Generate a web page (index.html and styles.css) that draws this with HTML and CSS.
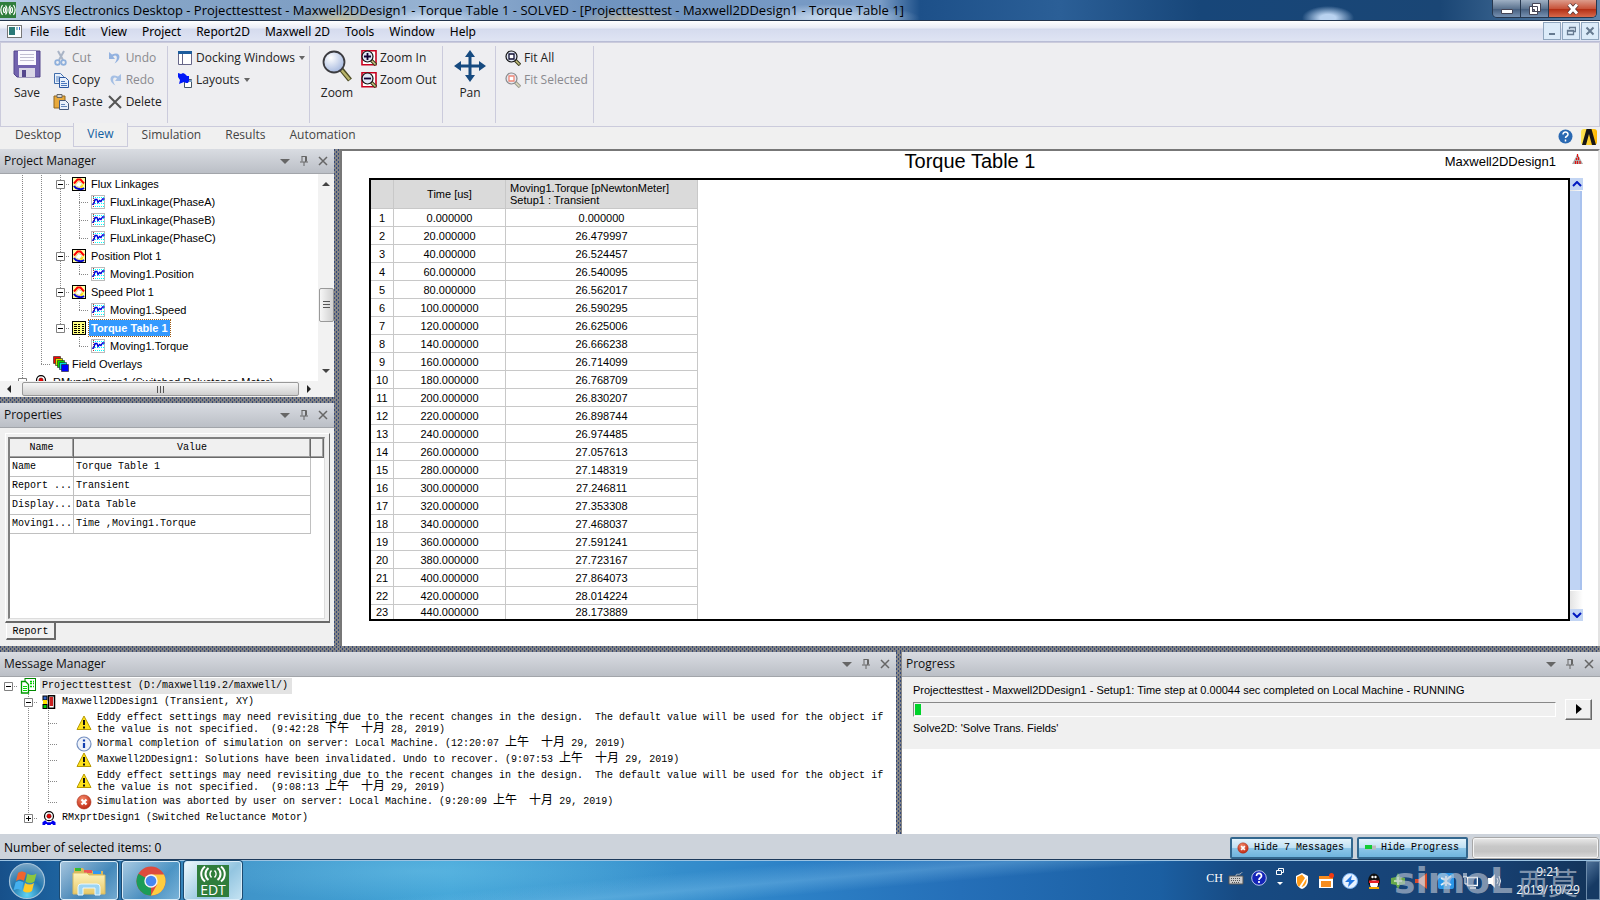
FILE: index.html
```html
<!DOCTYPE html>
<html lang="en">
<head>
<meta charset="utf-8">
<title>ANSYS Electronics Desktop</title>
<link rel="stylesheet" href="styles.css">
</head>
<body>
<svg class="defs" aria-hidden="true">
  <defs>
    <radialGradient id="gGlass" cx=".35" cy=".3" r=".8"><stop offset="0" stop-color="#fff"/><stop offset="1" stop-color="#9db2dc"/></radialGradient>
    <radialGradient id="gOrb" cx=".5" cy=".9" r=".9"><stop offset="0" stop-color="#5fd4f5"/><stop offset=".5" stop-color="#2377ae"/><stop offset="1" stop-color="#7ba6c6"/></radialGradient>
    <radialGradient id="gRed" cx=".4" cy=".3" r=".8"><stop offset="0" stop-color="#f58a6a"/><stop offset="1" stop-color="#b81c08"/></radialGradient>
    <linearGradient id="gFolder" x1="0" y1="0" x2="0" y2="1"><stop offset="0" stop-color="#fdf3bd"/><stop offset="1" stop-color="#e8c968"/></linearGradient>
    <linearGradient id="gYel" x1="0" y1="0" x2="1" y2="0"><stop offset="0" stop-color="#ffe95a"/><stop offset="1" stop-color="#fdb700"/></linearGradient>
  </defs>
  <symbol id="plot" viewBox="0 0 14 14"><rect x=".5" y=".5" width="13" height="13" fill="#ffffa8" stroke="#000"/><path d="M2 6.500L5.500 2.500h3L12 6.500" fill="none" stroke="#f00" stroke-width="2"/><path d="M2 9c2 3.500 8 4 10 2" fill="none" stroke="#00c" stroke-width="2"/><path d="M7 10l5-3-2 4z" fill="#ffe000"/><path d="M3 8.500L6.500 4.500l4 2-3 4z" fill="#fff" stroke="#c8b460" stroke-width=".6"/></symbol>
  <symbol id="trace" viewBox="0 0 14 14"><rect x=".5" y=".5" width="13" height="13" fill="#fff" stroke="#bbb"/><path d="M2 2.500h11M2 5.500h11M2 8.500h11M2 11.500h11" stroke="#0ff" stroke-dasharray="1 1"/><path d="M2.500 1v12" stroke="#a33" stroke-dasharray="1 1"/><path d="M1 9.500l2-1 1-4 2 0 1 3 1.500-2 1.500 1 1.500-2.500h2" fill="none" stroke="#00d" stroke-width="1.300"/></symbol>
  <symbol id="dtable" viewBox="0 0 14 14"><rect x=".5" y=".5" width="13" height="13" fill="#ffff80" stroke="#000"/><path d="M2 3.500h3M2 5.500h3M2 7.500h3M2 9.500h3M2 11.500h3M6 3.500h2M6 5.500h2M6 7.500h2M6 9.500h2M6 11.500h2M10 3.500h2M10 5.500h2M10 7.500h2M10 9.500h2M10 11.500h2" stroke="#000"/></symbol>
  <symbol id="overlays" viewBox="0 0 16 16"><g stroke="#222" stroke-width=".6"><path fill="#f00" d="M.5.5h7v7h-7z"/><path fill="#dd0" d="M2.500 2.500h7v7h-7z"/><path fill="#0d0" d="M4.500 4.500h7v7h-7z"/><path fill="#0dd" d="M6.500 6.500h7v7h-7z"/><path fill="#00f" d="M8.500 8.500h7v7h-7z"/></g></symbol>
  <symbol id="motor" viewBox="0 0 14 15"><path d="M0 15v-3l3-2 2 2h4l2-2 3 2v3h-3v-1H9v1H5v-1H3v1z" fill="#00e"/><circle cx="7" cy="5.500" r="4.800" fill="#fff" stroke="#000" stroke-width="1.300"/><circle cx="7" cy="5.500" r="2.300" fill="#e00" stroke="#400" stroke-width=".6"/></symbol>
  <symbol id="proj" viewBox="0 0 16 16"><rect x="5" y=".5" width="10.500" height="12" fill="#fff" stroke="#080"/><path d="M10 3.500h4M10 5.500h4M10 8.500h4" stroke="#0c0" stroke-dasharray="2 1" stroke-width="1.500"/><path d="M1.500 3.500h4l3 3v8.500h-7z" fill="#fff" stroke="#090" stroke-width="1.300"/><path d="M3 8.500h4M3 10.500h4M3 12.500h4" stroke="#0d0"/></symbol>
  <symbol id="design" viewBox="0 0 14 14"><rect x="6.500" y=".8" width="6" height="12.500" fill="#fff" stroke="#000" stroke-width="1.500"/><rect x="7.500" y="2" width="3.500" height="9" fill="#c22"/><rect x="1" y="1" width="4" height="4" fill="#36c" stroke="#000"/><rect x="1" y="5" width="4" height="4" fill="#fd0"/><rect x="1" y="9.500" width="4" height="4" fill="#0c0" stroke="#000"/></symbol>
  <symbol id="warn" viewBox="0 0 16 16"><path d="M8 1l7 13.500H1z" fill="#ffe21a" stroke="#b89a00" stroke-linejoin="round"/><path d="M8 5v5M8 11.500v2" stroke="#111" stroke-width="2"/></symbol>
  <symbol id="info" viewBox="0 0 16 16"><circle cx="8" cy="8" r="7" fill="#eef2fa" stroke="#7590c0" stroke-width="1.200"/><path d="M8 3.500v2M8 7v5" stroke="#1440b0" stroke-width="2.200"/></symbol>
  <symbol id="err" viewBox="0 0 16 16"><circle cx="8" cy="8" r="7" fill="url(#gRed)" stroke="#a83018" stroke-width=".6"/><path d="M5.500 5.500l5 5M10.500 5.500l-5 5" stroke="#fff" stroke-width="2.200"/></symbol>
  <symbol id="minus" viewBox="0 0 9 9"><path d="M.5.5h8v8h-8z" fill="#fff" stroke="#808080"/><path d="M2 4.500h5" stroke="#000"/></symbol>
  <symbol id="plus" viewBox="0 0 9 9"><path d="M.5.5h8v8h-8z" fill="#fff" stroke="#808080"/><path d="M2 4.500h5M4.500 2v5" stroke="#000"/></symbol>
  <symbol id="caret" viewBox="0 0 10 6"><path d="M0 1h10L5 6z" fill="#666"/></symbol>
  <symbol id="pin" viewBox="0 0 8 10"><path d="M1.500.5h5v5M2 .5v5M5.500 1v5M0 6h8M4 6v4" fill="none" stroke="#666"/></symbol>
  <symbol id="cross" viewBox="0 0 10 10"><path d="M1 1l8 8M9 1L1 9" stroke="#666" stroke-width="1.500"/></symbol>
  <symbol id="lens" viewBox="0 0 16 16"><path d="M10 10l5 5" stroke="#3a3a20" stroke-width="3.500"/><path d="M10.500 10.500l4 4" stroke="#c9c580" stroke-width="1.500"/><circle cx="6.500" cy="6.500" r="5.500" fill="#dfe6f4" stroke="#111" stroke-width="1.200"/></symbol>
</svg>

<header class="titlebar">
  <svg class="app-ico" viewBox="0 0 16 16"><rect width="16" height="16" fill="#2f7d3c"/><g fill="none" stroke="#fff" stroke-width="1.200"><ellipse cx="4.500" cy="8" rx="1" ry="2.500"/><ellipse cx="11.500" cy="8" rx="1" ry="2.500"/><path d="M2.500 3c-2 3-2 7 0 10M13.500 3c2 3 2 7 0 10M5.500 3.500c2 2 2 7 0 9M10.500 3.500c-2 2-2 7 0 9"/></g></svg>
  <h1>ANSYS Electronics Desktop - Projecttesttest - Maxwell2DDesign1 - Torque Table 1 - SOLVED - [Projecttesttest - Maxwell2DDesign1 - Torque Table 1]</h1>
  <div class="wincontrols">
    <button aria-label="Minimize"><svg width="12" height="12"><path d="M.5 6.500h11v4H.5z" fill="#fff" stroke="#445"/></svg></button>
    <button aria-label="Restore"><svg width="12" height="12"><path d="M3.500.5h8v8h-8zM.5 3.500h8v8h-8z" fill="#fff" stroke="#445"/><path d="M3.500 6.500h2v2h-2z" fill="#889" stroke="#445"/></svg></button>
    <button class="close" aria-label="Close"><svg width="12" height="12"><path d="M2 1.500l8 9M10 1.500l-8 9" stroke="#533" stroke-width="4.500"/><path d="M2 1.500l8 9M10 1.500l-8 9" stroke="#fff" stroke-width="3"/></svg></button>
  </div>
</header>

<nav class="menubar">
  <svg class="doc-ico" viewBox="0 0 15 13"><rect x=".5" y=".5" width="14" height="12" fill="#fff" stroke="#777"/><path d="M2 2h6v8H2z" fill="#2c7a78"/><path d="M9 2h2v3H9z" fill="#8bc"/><path d="M12 2h1v3h-1z" fill="#36c"/></svg>
  <button>File</button><button>Edit</button><button>View</button><button>Project</button><button>Report2D</button><button>Maxwell 2D</button><button>Tools</button><button>Window</button><button>Help</button>
  <div class="mdi">
    <button aria-label="Minimize document"><svg width="10" height="10"><path d="M2 8h6" stroke="#667a90" stroke-width="2"/></svg></button>
    <button aria-label="Restore document"><svg width="10" height="10"><path d="M3.500 3V1.500h6v4H8M1.500 4.500h6v4h-6zM1 5h7M3 1.500h7" fill="none" stroke="#667a90" stroke-width="1.300"/></svg></button>
    <button aria-label="Close document"><svg width="10" height="10"><path d="M1.500 1.500l7 7M8.500 1.500l-7 7" stroke="#667a90" stroke-width="2"/></svg></button>
  </div>
</nav>

<section class="ribbon">
  <div class="group g-edit">
    <button class="big"><svg width="28" height="28" viewBox="0 0 28 28"><path d="M1 1h26v26H4l-3-3z" fill="#7263ae" stroke="#54468c"/><path d="M5 1h18v14H5z" fill="#fbfaff"/><path d="M7 4.500h14M7 7.500h14M7 10.500h14" stroke="#c2bfd2"/><path d="M6 18h16v9H6z" fill="#d9d6e6"/><path d="M9 20h4v7H9z" fill="#54468c"/></svg><span>Save</span></button>
    <div class="col">
      <button class="cmd" disabled><svg viewBox="0 0 16 16"><path d="M5 1l5 9M11 1L6 10" stroke="#a9b4c6" stroke-width="2"/><circle cx="4.500" cy="12.500" r="2.300" fill="none" stroke="#8fb0dc" stroke-width="1.800"/><circle cx="10.500" cy="12.500" r="2.300" fill="none" stroke="#8fb0dc" stroke-width="1.800"/></svg>Cut</button>
      <button class="cmd"><svg viewBox="0 0 16 16"><path d="M1.500 1.500h6l3 3v7h-9z" fill="#e8f0fb" stroke="#3f6cab"/><path d="M3 5h4M3 7h4M3 9h3" stroke="#5b86c2"/><path d="M6.500 5.500h6l3 3v7h-9z" fill="#e8f0fb" stroke="#2c57a0"/><path d="M8 9.500h4M8 11.500h6M8 13.500h6" stroke="#4b78bd"/></svg>Copy</button>
      <button class="cmd"><svg viewBox="0 0 16 16"><path d="M1 2h11v12H1z" fill="#e8a93c" stroke="#8d6520"/><path d="M4 .5h5v3H4z" fill="#d8d8d8" stroke="#666"/><path d="M6.500 6.500h6l3 3v6h-9z" fill="#e9f0fa" stroke="#45597c"/><path d="M8 10.500h4M8 12.500h6" stroke="#6486b9"/></svg>Paste</button>
    </div>
    <div class="col">
      <button class="cmd" disabled><svg viewBox="0 0 16 16"><path d="M2 2v7h6L6 6.500c4-3 5.500 2 1.500 7 7-3 7-13-2.500-9z" fill="#93b2e0"/></svg>Undo</button>
      <button class="cmd" disabled><svg viewBox="0 0 16 16"><path d="M14 2v7H8l2-2.500c-4-3-5.500 2-1.500 7-7-3-7-13 2.500-9z" fill="#a5bfe4"/></svg>Redo</button>
      <button class="cmd"><svg viewBox="0 0 16 16"><path d="M2 2l12 12M14 2L2 14" stroke="#555" stroke-width="2"/></svg>Delete</button>
    </div>
  </div>
  <div class="group g-dock">
    <div class="col">
      <button class="cmd"><svg viewBox="0 0 16 16"><path d="M1.500 1.500h13v13h-13z" fill="#fff" stroke="#668"/><path d="M1 1h14v3H1z" fill="#1c5c9c"/><path d="M5.500 4v10" stroke="#668"/></svg>Docking Windows<i class="drop"></i></button>
      <button class="cmd"><svg viewBox="0 0 16 16"><path d="M7.500 7.500h7v8h-7z" fill="#fff" stroke="#456"/><path d="M8 8h7v2H8z" fill="#79b"/><path d="M1 1l3 1 2-1 2 1 2 2 2 0v5l-1 2-2 0-2-1-5 2 1-4-2-3z" fill="#0018f8"/></svg>Layouts<i class="drop"></i></button>
    </div>
  </div>
  <div class="group g-zoom">
    <button class="big"><svg width="30" height="32" viewBox="0 0 30 32"><path d="M19 19l9 11" stroke="#4b4a22" stroke-width="5"/><path d="M19.500 20l8 9.500" stroke="#b9b46a" stroke-width="2.500"/><circle cx="12" cy="12" r="10.500" fill="url(#gGlass)" stroke="#3c3c40" stroke-width="1.800"/></svg><span>Zoom</span></button>
    <div class="col">
      <button class="cmd"><svg viewBox="0 0 16 16"><path d="M1 .8h14v14H1z" fill="#fff" stroke="#c8001e" stroke-width="1.600"/><use href="#lens"/><path d="M3 6.500h7M6.500 3v7" stroke="#103" stroke-width="1.800"/></svg>Zoom In</button>
      <button class="cmd"><svg viewBox="0 0 16 16"><path d="M1 .8h14v14H1z" fill="#fff" stroke="#c8001e" stroke-width="1.600"/><use href="#lens"/><path d="M3 6.500h7" stroke="#103" stroke-width="1.800"/></svg>Zoom Out</button>
    </div>
  </div>
  <div class="group g-pan">
    <button class="big"><svg width="32" height="32" viewBox="0 0 32 32"><path d="M16 0l5 7h-3.500v7.500H25V11l7 5-7 5v-3.500h-7.500V25H21l-5 7-5-7h3.500v-7.500H7V21l-7-5 7-5v3.500h7.500V7H11z" fill="#164a80"/></svg><span>Pan</span></button>
  </div>
  <div class="group g-fit">
    <div class="col">
      <button class="cmd"><svg viewBox="0 0 16 16"><use href="#lens"/><path d="M4 4h5v5H4z" fill="#fff" stroke="#113" stroke-width="1.300"/></svg>Fit All</button>
      <button class="cmd" disabled><svg viewBox="0 0 16 16"><g opacity=".45"><use href="#lens"/></g><path d="M4 4h5v5H4z" fill="#fff" stroke="#f08878" stroke-width="1.300"/></svg>Fit Selected</button>
    </div>
  </div>
</section>
<nav class="tabs">
  <button>Desktop</button><button class="on">View</button><button>Simulation</button><button>Results</button><button>Automation</button>
  <div class="tabs-right">
    <button aria-label="Help"><svg width="15" height="15" viewBox="0 0 15 15"><circle cx="7.500" cy="7.500" r="7" fill="#2a69b2"/><path d="M5 5.500c0-3.500 5-3 5 0 0 2-2.500 1.500-2.500 3.500M7.500 10.500v2" fill="none" stroke="#fff" stroke-width="1.500"/></svg></button>
    <svg width="16" height="16" viewBox="0 0 16 16"><rect width="16" height="16" rx="3" fill="url(#gYel)"/><path d="M1 16L5.500 0h5L15 16h-4L8 5 5 16z" fill="#171717"/></svg>
  </div>
</nav>

<main class="workspace">
  <div class="left">
    <section class="pm">
      <h2 class="phead">Project Manager<span class="ptools"><button aria-label="Menu"><svg width="10" height="6"><use href="#caret"/></svg></button><button aria-label="Pin"><svg width="8" height="10"><use href="#pin"/></svg></button><button aria-label="Close"><svg width="10" height="10"><use href="#cross"/></svg></button></span></h2>
      <div class="treewrap">
        <ul class="tree">
          <li><i class="v"></i><i class="v"></i><i class="v h"><svg class="exp"><use href="#minus"/></svg></i><i class="ic"><svg><use href="#plot"/></svg></i><span>Flux Linkages</span></li>
          <li><i class="v"></i><i class="v"></i><i class="v"></i><i class="v h"></i><i class="ic"><svg><use href="#trace"/></svg></i><span>FluxLinkage(PhaseA)</span></li>
          <li><i class="v"></i><i class="v"></i><i class="v"></i><i class="v h"></i><i class="ic"><svg><use href="#trace"/></svg></i><span>FluxLinkage(PhaseB)</span></li>
          <li><i class="v"></i><i class="v"></i><i class="v"></i><i class="l h"></i><i class="ic"><svg><use href="#trace"/></svg></i><span>FluxLinkage(PhaseC)</span></li>
          <li><i class="v"></i><i class="v"></i><i class="v h"><svg class="exp"><use href="#minus"/></svg></i><i class="ic"><svg><use href="#plot"/></svg></i><span>Position Plot 1</span></li>
          <li><i class="v"></i><i class="v"></i><i class="v"></i><i class="l h"></i><i class="ic"><svg><use href="#trace"/></svg></i><span>Moving1.Position</span></li>
          <li><i class="v"></i><i class="v"></i><i class="v h"><svg class="exp"><use href="#minus"/></svg></i><i class="ic"><svg><use href="#plot"/></svg></i><span>Speed Plot 1</span></li>
          <li><i class="v"></i><i class="v"></i><i class="v"></i><i class="l h"></i><i class="ic"><svg><use href="#trace"/></svg></i><span>Moving1.Speed</span></li>
          <li><i class="v"></i><i class="v"></i><i class="l h"><svg class="exp"><use href="#minus"/></svg></i><i class="ic"><svg><use href="#dtable"/></svg></i><span class="sel">Torque Table 1</span></li>
          <li><i class="v"></i><i class="v"></i><i></i><i class="l h"></i><i class="ic"><svg><use href="#trace"/></svg></i><span>Moving1.Torque</span></li>
          <li><i class="v"></i><i class="l h"></i><i class="ic"><svg class="i16"><use href="#overlays"/></svg></i><span>Field Overlays</span></li>
          <li><i class="v h"><svg class="exp"><use href="#minus"/></svg></i><i class="ic"><svg><use href="#motor"/></svg></i><span>RMxprtDesign1 (Switched Reluctance Motor)</span></li>
        </ul>
        <div class="vscroll">
          <svg width="8" height="5"><path d="M0 5l4-4 4 4z" fill="#444"/></svg>
          <div class="vthumb"><i></i><i></i><i></i></div>
          <svg width="8" height="5"><path d="M0 0l4 4 4-4z" fill="#444"/></svg>
        </div>
      </div>
      <div class="hscroll">
        <svg width="5" height="8"><path d="M5 0L1 4l4 4z" fill="#222"/></svg>
        <div class="hthumb"><i></i><i></i><i></i></div>
        <svg width="5" height="8"><path d="M0 0l4 4-4 4z" fill="#222"/></svg>
      </div>
    </section>
    <div class="split"></div>
    <section class="props">
      <h2 class="phead">Properties<span class="ptools"><button aria-label="Menu"><svg width="10" height="6"><use href="#caret"/></svg></button><button aria-label="Pin"><svg width="8" height="10"><use href="#pin"/></svg></button><button aria-label="Close"><svg width="10" height="10"><use href="#cross"/></svg></button></span></h2>
      <div class="propbox"><div class="propinner">
        <table>
          <colgroup><col class="p1"><col><col class="p3"></colgroup>
          <thead><tr><th>Name</th><th>Value</th><th></th></tr></thead>
          <tbody>
            <tr><td>Name</td><td>Torque Table 1</td></tr>
            <tr><td>Report ...</td><td>Transient</td></tr>
            <tr><td>Display...</td><td>Data Table</td></tr>
            <tr><td>Moving1...</td><td>Time ,Moving1.Torque</td></tr>
          </tbody>
        </table>
      </div></div>
      <button class="ptab">Report</button>
    </section>
  </div>
  <div class="split"></div>
  <section class="report">
    <div class="rhead"><span></span><h2>Torque Table 1</h2><div class="rname"><span>Maxwell2DDesign1</span><svg width="12" height="12" viewBox="0 0 12 12"><path d="M5.500 0L11 10H0z" fill="#aaa"/><path d="M5.500 0v3M4.500 4v2M6.500 3v3M3.500 7v3M5.500 7v3M8 7v3" stroke="#e01010" stroke-width="1.200"/></svg></div></div>
    <div class="rbody">
      <div class="frame">
        <table class="data">
          <colgroup><col class="c1"><col class="c2"><col class="c3"></colgroup>
          <thead><tr><th></th><th>Time [us]</th><th class="lft">Moving1.Torque [pNewtonMeter]<br>Setup1 : Transient</th></tr></thead>
          <tbody>
            <tr><td>1</td><td>0.000000</td><td>0.000000</td></tr>
            <tr><td>2</td><td>20.000000</td><td>26.479997</td></tr>
            <tr><td>3</td><td>40.000000</td><td>26.524457</td></tr>
            <tr><td>4</td><td>60.000000</td><td>26.540095</td></tr>
            <tr><td>5</td><td>80.000000</td><td>26.562017</td></tr>
            <tr><td>6</td><td>100.000000</td><td>26.590295</td></tr>
            <tr><td>7</td><td>120.000000</td><td>26.625006</td></tr>
            <tr><td>8</td><td>140.000000</td><td>26.666238</td></tr>
            <tr><td>9</td><td>160.000000</td><td>26.714099</td></tr>
            <tr><td>10</td><td>180.000000</td><td>26.768709</td></tr>
            <tr><td>11</td><td>200.000000</td><td>26.830207</td></tr>
            <tr><td>12</td><td>220.000000</td><td>26.898744</td></tr>
            <tr><td>13</td><td>240.000000</td><td>26.974485</td></tr>
            <tr><td>14</td><td>260.000000</td><td>27.057613</td></tr>
            <tr><td>15</td><td>280.000000</td><td>27.148319</td></tr>
            <tr><td>16</td><td>300.000000</td><td>27.246811</td></tr>
            <tr><td>17</td><td>320.000000</td><td>27.353308</td></tr>
            <tr><td>18</td><td>340.000000</td><td>27.468037</td></tr>
            <tr><td>19</td><td>360.000000</td><td>27.591241</td></tr>
            <tr><td>20</td><td>380.000000</td><td>27.723167</td></tr>
            <tr><td>21</td><td>400.000000</td><td>27.864073</td></tr>
            <tr><td>22</td><td>420.000000</td><td>28.014224</td></tr>
            <tr class="short"><td>23</td><td>440.000000</td><td>28.173889</td></tr>
          </tbody>
        </table>
      </div>
      <div class="bscroll">
        <button aria-label="Scroll up"><svg width="10" height="6"><path d="M1 5l4-4 4 4" fill="none" stroke="#0018c0" stroke-width="2"/></svg></button>
        <div class="bthumb"></div>
        <button aria-label="Scroll down"><svg width="10" height="6"><path d="M1 1l4 4 4-4" fill="none" stroke="#0018c0" stroke-width="2"/></svg></button>
      </div>
    </div>
  </section>
</main>
<div class="split"></div>
<div class="dock">
  <section class="msgs">
    <h2 class="phead">Message Manager<span class="ptools"><button aria-label="Menu"><svg width="10" height="6"><use href="#caret"/></svg></button><button aria-label="Pin"><svg width="8" height="10"><use href="#pin"/></svg></button><button aria-label="Close"><svg width="10" height="10"><use href="#cross"/></svg></button></span></h2>
    <ul class="mtree">
      <li><i class="h"><svg class="exp"><use href="#minus"/></svg></i><i class="mi"><svg class="i16"><use href="#proj"/></svg></i><span class="hl">Projecttesttest (D:/maxwell19.2/maxwell/)</span></li>
      <li><i></i><i class="v h"><svg class="exp"><use href="#minus"/></svg></i><i class="mi"><svg><use href="#design"/></svg></i><span>Maxwell2DDesign1 (Transient, XY)</span></li>
      <li class="two"><i></i><i class="v"></i><i class="v h"></i><i class="gap"></i><svg class="i16"><use href="#warn"/></svg><span>Eddy effect settings may need revisiting due to the recent changes in the design.&nbsp; The default value will be used for the object if<br>the value is not specified.&nbsp; (9:42:28 <b>下午</b>&nbsp; <b>十月</b> 28, 2019)</span></li>
      <li><i></i><i class="v"></i><i class="v h"></i><i class="gap"></i><svg class="i16"><use href="#info"/></svg><span>Normal completion of simulation on server: Local Machine. (12:20:07 <b>上午</b>&nbsp; <b>十月</b> 29, 2019)</span></li>
      <li><i></i><i class="v"></i><i class="v h"></i><i class="gap"></i><svg class="i16"><use href="#warn"/></svg><span>Maxwell2DDesign1: Solutions have been invalidated. Undo to recover. (9:07:53 <b>上午</b>&nbsp; <b>十月</b> 29, 2019)</span></li>
      <li class="two"><i></i><i class="v"></i><i class="v h"></i><i class="gap"></i><svg class="i16"><use href="#warn"/></svg><span>Eddy effect settings may need revisiting due to the recent changes in the design.&nbsp; The default value will be used for the object if<br>the value is not specified.&nbsp; (9:08:13 <b>上午</b>&nbsp; <b>十月</b> 29, 2019)</span></li>
      <li><i></i><i class="v"></i><i class="l h"></i><i class="gap"></i><svg class="i16"><use href="#err"/></svg><span>Simulation was aborted by user on server: Local Machine. (9:20:09 <b>上午</b>&nbsp; <b>十月</b> 29, 2019)</span></li>
      <li><i></i><i class="l h"><svg class="exp"><use href="#plus"/></svg></i><i class="mi"><svg><use href="#motor"/></svg></i><span>RMxprtDesign1 (Switched Reluctance Motor)</span></li>
    </ul>
  </section>
  <div class="split"></div>
  <section class="progress">
    <h2 class="phead">Progress<span class="ptools"><button aria-label="Menu"><svg width="10" height="6"><use href="#caret"/></svg></button><button aria-label="Pin"><svg width="8" height="10"><use href="#pin"/></svg></button><button aria-label="Close"><svg width="10" height="10"><use href="#cross"/></svg></button></span></h2>
    <div class="job">
      <p>Projecttesttest - Maxwell2DDesign1 - Setup1: Time step at 0.00044 sec completed on Local Machine - RUNNING</p>
      <div class="barrow"><div class="bar"><i style="width:6px"></i></div><button aria-label="Job options"><svg width="6" height="10"><path d="M0 0l6 5-6 5z"/></svg></button></div>
      <p>Solve2D: 'Solve Trans. Fields'</p>
    </div>
  </section>
</div>
<footer class="status">
  <span>Number of selected items: 0</span>
  <button><svg width="12" height="12"><use href="#err"/></svg>Hide 7 Messages</button>
  <button><svg width="12" height="12" viewBox="0 0 12 12"><path d="M1 3.500h11v4H1z" fill="#bbb"/><path d="M1 3h7v4H1z" fill="#1c3"/></svg>Hide Progress</button>
  <div class="meter"></div>
</footer>

<div class="taskbar">
  <button class="start" aria-label="Start"><svg width="38" height="38" viewBox="0 0 38 38"><circle cx="19" cy="19" r="17.500" fill="url(#gOrb)" stroke="#a6c4da" stroke-width="1.200"/><path d="M10 11c3-2 5-2 8 0l-2 8c-3-2-5-2-8 0z" fill="#f0642d"/><path d="M19.500 11.500c3 2 6 2 9 0l-2 8c-3 2-6 2-9 0z" fill="#8cc63e"/><path d="M7.500 20.500c3-2 5-2 8 0l-2 8c-3-2-5-2-8 0z" fill="#45b0ee"/><path d="M17 21c3 2 6 2 9 0l-2 8c-3 2-6 2-9 0z" fill="#ffc926"/></svg></button>
  <button class="app" aria-label="Explorer"><svg width="34" height="32" viewBox="0 0 34 32"><path d="M2 3h9l2 3h18v22H2z" fill="#dbb95a"/><path d="M3 3h6v3H3z" fill="#3b3"/><path d="M12 5h8v3h-8z" fill="#e55"/><path d="M21 6h8v3h-8z" fill="#39e"/><path d="M1 8h14l2 2h16v19H1z" fill="url(#gFolder)" stroke="#d9bb62"/><path d="M6 30v-8q0-3 3-3h16q3 0 3 3v8h-5v-7H11v7z" fill="#9bd4f3" stroke="#e9f7ff"/></svg></button>
  <button class="app" aria-label="Chrome"><svg width="30" height="30" viewBox="0 0 30 30"><circle cx="15" cy="15" r="14.500" fill="#dd4b3e"/><path d="M15 15L2.500 7.700A14.500 14.500 0 0 0 15 29.500z" fill="#1b9c57"/><path d="M15 29.500A14.500 14.500 0 0 0 28 8.500H15l6 10z" fill="#fecd41"/><circle cx="15" cy="15" r="6.700" fill="#f4f4f4"/><circle cx="15" cy="15" r="5.300" fill="#4787f0"/></svg></button>
  <button class="app active" aria-label="EDT"><span class="edt"><svg width="32" height="18" viewBox="0 0 32 18"><g fill="none" stroke="#fff"><path d="M14.500 5.500c-2 2-2 5 0 7M17.500 5.500c2 2 2 5 0 7" stroke-width="1.500"/><path d="M11.500 3c-4 3-4 9 0 12M20.500 3c4 3 4 9 0 12M8 1.500c-5 4-5 11 0 15M24 1.500c5 4 5 11 0 15" stroke-width="2"/></g></svg><b>EDT</b></span></button>
  <div class="tray">
    <span class="ch">CH</span>
    <svg class="t1" viewBox="0 0 16 16"><path d="M1 6h14v8H1z" fill="#ccc" stroke="#555"/><path d="M3 8.500h10M3 10.500h10M4 12.500h8" stroke="#555" stroke-dasharray="1 1"/><path d="M8 6c0-3 2-1 4-2s2-2 2-2" fill="none" stroke="#bbb"/></svg>
    <svg class="t1" viewBox="0 0 16 16"><circle cx="8" cy="8" r="7.300" fill="#1424b8" stroke="#b8c4e8"/><path d="M5.500 6c0-4 5-3 5 0 0 2-2.500 1.500-2.500 4M8 11v2" fill="none" stroke="#fff" stroke-width="1.700"/></svg>
    <svg class="t2" viewBox="0 0 8 20"><path d="M2.500 3V.5h5v4H5.500M.5 2.500h5v4h-5z" fill="none" stroke="#fff"/><path d="M1 14h6l-3 3z" fill="#fff"/></svg>
    <svg class="t3" viewBox="0 0 16 16"><path d="M8 0l6 3v5c0 4-3 7-6 8-3-1-6-4-6-8V3z" fill="#fff"/><path d="M8 1.500L3 4v5c0 2 1 4 2 5l6-9zM12.500 5.500l-5 8.500c3 0 5-4 5-6z" fill="#ff9a16"/></svg>
    <svg class="t3" viewBox="0 0 16 16"><path d="M1 3h14v12H1z" fill="#fff"/><path d="M1 3h14v3H1zM3 8h10v6H3z" fill="#f68c1e"/><circle cx="13.500" cy="2.500" r="2.500" fill="#f33a12"/></svg>
    <svg class="t3" viewBox="0 0 16 16"><circle cx="8" cy="8" r="7.500" fill="#e8f2ff" stroke="#7ab3f5"/><path d="M10 2L3 9h4l-1 5 7-7H9z" fill="#2376e0"/></svg>
    <svg class="t3" viewBox="0 0 16 16"><ellipse cx="8" cy="8" rx="6" ry="7.500" fill="#111"/><ellipse cx="8" cy="11" rx="4" ry="4" fill="#fff"/><path d="M3 7.500h10v2.500H3z" fill="#e81e24"/><path d="M3 15h10" stroke="#f5a800" stroke-width="2"/><circle cx="6.500" cy="4" r="1.200" fill="#fff"/><circle cx="9.500" cy="4" r="1.200" fill="#fff"/></svg>
    <svg class="t3" viewBox="0 0 16 16"><path d="M8 0l2 4 5 1v6l-5 1-2 4-2-4-5-1V5l5-1z" fill="#68a94a"/><path d="M8 4v8M4 8h8" stroke="#d8efc0" stroke-width="1.500"/></svg>
    <svg class="t3" viewBox="0 0 16 16"><path d="M1 6h4l8-6v16l-8-6H1z" fill="#d94a2a"/><path d="M5 6l6-4v12l-6-4z" fill="#f3a38e"/></svg>
    <svg class="t3" viewBox="0 0 16 16"><rect width="16" height="16" rx="2" fill="#2a96e8"/><path d="M3 5l5 2 5-4M3 12l5-3 5 3M8 3v10" stroke="#e2f3ff" stroke-width="2" fill="none"/></svg>
    <svg class="t3" viewBox="0 0 16 16"><path d="M5.500 4.500h10v8h-10zM8 15h6" fill="#1c4d86" stroke="#fff" stroke-width="1.500"/><path d="M2 0v4M4 0v4M1 4h4M3 5v6h2" stroke="#fff" fill="none"/></svg>
    <svg class="t3" viewBox="0 0 16 16"><path d="M2 5h3l4-4v14l-4-4H2z" fill="#fff"/><path d="M11 5q2 3 0 6M13 3q3 5 0 10" fill="none" stroke="#fff"/></svg>
    <span class="clock">9:21<br>2019/10/29</span>
    <button class="desk" aria-label="Show desktop"></button>
  </div>
  <div class="mark"><span class="latin">simoL</span><span>西莫</span></div>
</div>
</body>
</html>
```

FILE: styles.css
```css
* { box-sizing: border-box; }
body {
  margin: 0;
  height: 100vh;
  display: flex;
  flex-direction: column;
  background: #f0f0f0;
  color: #000;
  font: 12px/16px "Open Sans", "Noto Sans", sans-serif;
  overflow: hidden;
}
button { border: 0; padding: 0; background: none; font: inherit; color: inherit; }
h1, h2, p, ul { margin: 0; padding: 0; font-weight: normal; list-style: none; }
svg { display: block; flex: none; }
.defs { position: absolute; width: 0; height: 0; }

.titlebar {
  display: flex;
  align-items: center;
  height: 21px;
  flex: none;
  background:
    radial-gradient(ellipse 26px 12px at 1328px 18px, #b9d2f0 30%, transparent),
    radial-gradient(ellipse 50px 12px at 340px 20px, #c9c3a2, transparent),
    radial-gradient(ellipse 60px 12px at 430px 20px, #d3e3f6, transparent),
    radial-gradient(ellipse 50px 12px at 630px 20px, #c8bfa8, transparent),
    radial-gradient(ellipse 90px 14px at 830px 18px, #cfe0f2, transparent),
    linear-gradient(90deg, #b5cbe0 0, #87a6c8 130px, #7f9fc4 300px, #96b2d2 420px, #6f93bf 600px, #7a9cc6 880px, #1d5089 920px, #2b5f97 1060px, #174679 1200px, #1a4675 1440px, #5f86ad 1600px);
  border-bottom: 1px solid #23344c;
}
.app-ico { width: 16px; height: 16px; }
.titlebar h1 { flex: 1; margin-left: 5px; font-size: 13px; line-height: 20px; white-space: nowrap; }
.wincontrols { display: flex; align-self: flex-start; height: 18px; margin-right: 3px; border: 1px solid #26374e; border-top: 0; border-radius: 0 0 5px 5px; overflow: hidden; }
.wincontrols button { width: 28px; display: grid; place-items: center; border-right: 1px solid #26374e; background: linear-gradient(#9fb0c4, #5d7490 50%, #435c7c 51%, #7791b2); }
.wincontrols .close { width: 47px; border: 0; background: linear-gradient(#dd9c8b, #c8543b 50%, #b02a10 51%, #d86a4c); }

.menubar { display: flex; align-items: center; gap: 1px; height: 21px; flex: none; padding-left: 7px; background: linear-gradient(#fff, #eaedf6 35%, #d5dbee 40%, #dfe4f3); border-bottom: 1px solid #b9bdd6; font-family: "Noto Sans", sans-serif; }
.doc-ico { width: 15px; height: 13px; }
.menubar > button { padding: 1px 7px 0; line-height: 20px; }
.mdi { margin-left: auto; display: flex; gap: 1px; padding-right: 1px; }
.mdi button { width: 18px; height: 18px; display: grid; place-items: center; background: #dcebf9; border: 1px solid #8fa5bd; }

.ribbon { display: flex; height: 85px; flex: none; background: #eeeef1; border: 1px solid #cbcbdc; padding: 3px 0; }
.group { display: flex; border-right: 1px solid #cbcbdc; }
.g-edit { width: 167px; padding-left: 7px; }
.g-dock { width: 142px; padding-left: 9px; }
.g-zoom { width: 133px; padding-left: 7px; }
.g-pan { width: 53px; padding-left: 8px; }
.g-fit { width: 98px; padding-left: 9px; }
.big { display: flex; flex-direction: column; align-items: center; justify-content: space-between; height: 55px; min-width: 38px; padding-top: 4px; margin-right: 7px; color: #222; }
.g-zoom .big { min-width: 40px; margin-right: 4px; }
.col { display: flex; flex-direction: column; padding-top: 1px; margin-right: 4px; }
.g-dock .col, .g-fit .col { margin: 0; }
.cmd { display: flex; align-items: center; gap: 3px; height: 22px; white-space: nowrap; color: #222; }
.cmd svg { width: 16px; height: 16px; }
.cmd:disabled { color: #8a8a8f; }
.drop { margin-left: 1px; border: 3px solid transparent; border-top: 4px solid #666; border-bottom: 0; }
.tabs { display: flex; height: 22px; flex: none; padding-left: 3px; background: #f0f0f0; color: #444; }
.tabs > button { padding: 0 12px 1px; height: 17px; }
.tabs .on { margin-top: -4px; height: 24px; padding: 3px 13px 6px; color: #1260a0; background: #f0f0f0; border: 1px solid #cbcbdc; border-top: 0; }
.tabs .on + button { padding-left: 14px; }
.tabs-right { margin-left: auto; display: flex; align-items: flex-start; gap: 8px; padding: 2px 3px 0 0; }

.split {
  flex: none;
  min-width: 6px;
  min-height: 6px;
  background-color: #858585;
  background-image: conic-gradient(at 1px 2px, transparent 75%, #34497a 0), conic-gradient(at 1px 2px, transparent 75%, #34497a 0);
  background-size: 4px 4px;
  background-position: 0 0, 2px 2px;
}

.workspace { display: flex; flex: 1; min-height: 0; }
.left { width: 334px; flex: none; display: flex; flex-direction: column; }
.pm { flex: 248; min-height: 0; display: flex; flex-direction: column; background: #f0f0f0; }
.props { flex: 243; min-height: 0; display: flex; flex-direction: column; }
.phead { display: flex; align-items: center; height: 25px; flex: none; padding: 0 6px 0 4px; font-size: 12px; line-height: 22px; color: #111; background: linear-gradient(#d9dce2, #bbbfc6); border-bottom: 1px solid #a2a5aa; }
.ptools { margin-left: auto; display: flex; align-items: center; gap: 10px; }
.treewrap { flex: 1; min-height: 0; display: flex; background: #fff; }
.tree { flex: 1; min-width: 0; overflow: hidden; font: 11px/16px "Liberation Sans", Arial, sans-serif; padding-top: 1px; }
.tree li { display: flex; align-items: center; height: 18px; padding-left: 13px; white-space: nowrap; }
.tree i, .mtree i { flex: none; align-self: stretch; width: 19px; display: grid; place-items: center; background-repeat: no-repeat; --d: repeating-linear-gradient(#888 0 1px, transparent 1px 2px); --e: repeating-linear-gradient(90deg, #888 0 1px, transparent 1px 2px); }
.tree .ic { justify-items: start; padding-left: 2px; }
.v { background-image: var(--d); background-size: 1px 100%; background-position: 9px 0; }
.h { background-image: var(--e); background-size: 10px 1px; background-position: 9px 9px; }
.v.h { background-image: var(--d), var(--e); background-size: 1px 100%, 10px 1px; background-position: 9px 0, 9px 9px; }
.l.h { background-image: var(--d), var(--e); background-size: 1px 9px, 10px 1px; background-position: 9px 0, 9px 9px; }
.tree svg, .mtree svg { width: 14px; height: 14px; }
.tree svg.exp, .mtree svg.exp { width: 9px; height: 9px; }
.tree svg.i16, .mtree svg.i16 { width: 16px; height: 16px; }
.tree span { padding: 0 2px; }
.tree .sel { background: #3399ff; color: #fff; font-weight: bold; line-height: 16px; outline: 1px dotted #a05a10; }
.vscroll { width: 16px; display: flex; flex-direction: column; align-items: center; justify-content: space-between; padding: 7px 0; background: #f2f2f2; }
.vthumb { width: 15px; height: 34px; margin-top: 54px; border: 1px solid #999; border-radius: 2px; background: linear-gradient(90deg, #f6f6f6, #d0d0d0); display: flex; flex-direction: column; justify-content: center; align-items: center; gap: 2px; }
.vthumb i { width: 7px; height: 1px; background: #555; }
.hscroll { height: 16px; flex: none; display: flex; align-items: center; padding: 0 22px 0 6px; gap: 11px; background: #f2f2f2; }
.hscroll svg:last-child { margin-left: -3px; }
.hthumb { flex: 1; height: 14px; border: 1px solid #999; border-radius: 2px; background: linear-gradient(#f6f6f6, #cfcfcf); display: flex; justify-content: center; align-items: center; gap: 2px; }
.hthumb i { width: 1px; height: 7px; background: #555; }

.propbox { flex: 1; min-height: 0; margin: 5px 4px 0 5px; padding: 3px 4px 2px 2px; border: 1px solid #fff; border-right: 1px solid #696969; border-bottom: 2px solid #696969; display: flex; }
.propinner { flex: 1; border: 2px solid #808080; border-right: 1px solid #ddd; border-bottom: 1px solid #ddd; background: #fff; }
.props table { width: 100%; table-layout: fixed; border-collapse: separate; border-spacing: 0; font: 10px/14px "Liberation Mono", monospace; }
.p1 { width: 64px; }
.p3 { width: 13px; }
.props th { height: 19px; padding: 0; font-weight: normal; background: #f0f0f0; border-right: 1px solid #696969; border-bottom: 1px solid #696969; box-shadow: inset -1px -1px #a0a0a0; }
.props td { height: 19px; padding: 0 0 0 2px; white-space: nowrap; border-right: 1px solid #c0c0c0; border-bottom: 1px solid #c0c0c0; }
.ptab { align-self: flex-start; margin: 0 0 6px 6px; width: 50px; height: 17px; padding-top: 2px; font: 10px/14px "Liberation Mono", monospace; border-right: 2px solid #696969; border-bottom: 2px solid #696969; border-left: 1px solid #fff; }

.report { flex: 1; min-width: 0; display: flex; flex-direction: column; background: #fff; border-left: 2px solid #777; border-top: 2px solid #777; border-right: 2px solid #e3e3e3; font-family: "Liberation Sans", Arial, sans-serif; }
.rhead { display: grid; grid-template-columns: 1fr auto 1fr; height: 26px; flex: none; align-items: center; }
.rhead h2 { font-size: 20px; line-height: 20px; padding-bottom: 6px; }
.rname { display: flex; justify-content: flex-end; align-items: center; gap: 16px; padding: 0 14px 5px 0; font-size: 13px; }
.rname svg { margin-bottom: 4px; }
.rbody { flex: 1; min-height: 0; display: flex; padding: 1px 15px 25px 27px; }
.frame { flex: 1; border: 2px solid #000; overflow: hidden; }
.data { table-layout: fixed; width: 327px; border-collapse: separate; border-spacing: 0; font-size: 11px; line-height: 12px; text-align: center; }
.c1 { width: 23px; }
.c2 { width: 112px; }
.data th { height: 29px; padding: 0; font-weight: normal; background: #dadada; border-right: 1px solid #c8c8c8; border-bottom: 1px solid #c8c8c8; }
.data .lft { text-align: left; padding-left: 4px; }
.data td { height: 18px; padding: 0; border-right: 1px solid #c8c8c8; border-bottom: 1px solid #c8c8c8; }
.data .short td { height: 14px; border-bottom: 0; }
.bscroll { width: 13px; display: flex; flex-direction: column; background: linear-gradient(90deg, #e4e4e4, #fff); }
.bscroll button { height: 12px; display: grid; place-items: center; background: #c3d5f3; }
.bthumb { flex: 1; margin: 1px 0 18px; background: #c0d4f4; border: solid #fff; border-width: 0 1px 1px 0; box-shadow: inset -2px 0 #a9c2ee; }

.dock { display: flex; flex: none; height: 182px; background: #fff; }
.msgs { flex: 896; min-width: 0; display: flex; flex-direction: column; }
.progress { flex: 698; min-width: 0; }
.mtree { padding-top: 1px; font: 10px/12px "Liberation Mono", "Noto Sans CJK SC", monospace; }
.mtree li { display: flex; align-items: center; height: 16px; white-space: nowrap; }
.mtree li.two { height: 26px; }
.mtree li.two span { padding-top: 2px; }
.mtree i { width: 20px; justify-items: start; padding-left: 4px; }
.mtree i.mi { padding-left: 2px; }
.mtree i.mi:has(.i16) { padding-left: 0; }
.mtree i.gap { width: 16px; }
.mtree .v { background-position: 8px 0; }
.mtree .h { background-position: 8px 8px; }
.mtree .v.h { background-position: 8px 0, 8px 8px; }
.mtree .l.h { background-position: 8px 0, 8px 8px; }
.mtree .two .v.h { background-position: 8px 0, 8px 13px; }
.mtree span { padding-left: 2px; }
.mtree svg + span { padding-left: 5px; }
.mtree b { font-weight: normal; font-size: 12px; line-height: 10px; }
.mtree .hl { background: #e3e3e3; line-height: 16px; padding-right: 4px; }
.job { background: #f0f0f0; padding: 4px 8px 12px 11px; font: 11px/18px "Liberation Sans", Arial, sans-serif; }
.barrow { display: flex; align-items: center; gap: 9px; height: 20px; }
.bar { flex: 1; height: 15px; padding: 1px; border: 1px solid; border-color: #888 #fff #fff #888; }
.bar i { display: block; height: 11px; background: #00d22a; }
.barrow button { width: 27px; height: 21px; display: grid; place-items: center; border: 1px solid; border-color: #fff #696969 #696969 #fff; box-shadow: inset -1px -1px #a0a0a0; }

.status { display: flex; align-items: center; gap: 4px; height: 26px; flex: none; padding: 3px 1px 1px 4px; background: #cdd3db; border-bottom: 1px solid #1d3a5c; }
.status span { margin-right: auto; }
.status button { display: flex; align-items: center; gap: 5px; height: 22px; padding: 0 7px 0 5px; font: 10px/18px "Liberation Mono", monospace; border: 2px solid #33678e; border-radius: 2px; background: linear-gradient(#e2f2fb, #bfe0f3 50%, #8dc6e8 51%, #70b4dd); }
.meter { width: 127px; height: 22px; border: 2px solid #f5f5f5; outline: 1px solid #a8a8a8; outline-offset: -1px; border-radius: 3px; background: linear-gradient(#e6e6e6, #c8c8c8 40%, #c4c4c4 70%, #d8d8d8); }

.taskbar { position: relative; display: flex; height: 40px; flex: none; padding-left: 8px; border-top: 1px solid #9cc3e2;
  background:
    radial-gradient(ellipse 260px 30px at 420px 10px, rgba(120,200,235,.4), transparent),
    linear-gradient(175deg, transparent 40%, rgba(150,210,245,.3) 50%, transparent 58%),
    linear-gradient(90deg, #17508a 0, #1c609c 50px, #3f94c9 240px, #42a5d8 450px, #3b97d0 600px, #2c80c6 800px, #256fb8 960px, #1b5fa2 1160px, #174a82 1240px, #173f70 1500px, #123358 1600px); }
.start { width: 38px; margin-right: 14px; }
.app { width: 58px; margin-right: 4px; display: grid; place-items: center; border: 1px solid #d9ecf8; border-radius: 3px; box-shadow: 0 0 0 1px #1c4a70; background: linear-gradient(135deg, rgba(235,248,255,.65), rgba(120,180,215,.35) 60%, rgba(190,225,245,.5)); }
.app.active { background: linear-gradient(135deg, #eef8fd, #93c5e0 60%, #c3e2f2); }
.edt { display: flex; flex-direction: column; background: #2f7d3c; color: #fff; height: 32px; }
.edt b { font: 14px/13px "Open Sans", sans-serif; text-align: center; }
.tray { margin-left: auto; display: flex; align-items: center; color: #fff; }
.ch { font: 12px/14px "Liberation Serif", serif; margin: 0 5px 6px 0; }
.t1, .t3 { width: 16px; height: 16px; margin-right: 7px; }
.t1 { margin-bottom: 6px; }
.t2 { width: 8px; height: 20px; margin: 0 10px 6px 2px; }
.t3 { margin-right: 8px; }
.clock { width: 68px; margin-left: 4px; text-align: center; line-height: 18px; }
.desk { align-self: stretch; width: 14px; margin-left: 4px; border: 1px solid #6d8cab; background: linear-gradient(135deg, #4f7299, #163a64 60%); }
.mark { position: absolute; right: 22px; top: 7px; display: flex; gap: 5px; align-items: center; pointer-events: none; color: rgba(188,198,212,.65); font: 30px/26px "Noto Sans CJK SC", sans-serif; }
.latin { font: bold 36px/26px "DejaVu Sans", sans-serif; }
```
